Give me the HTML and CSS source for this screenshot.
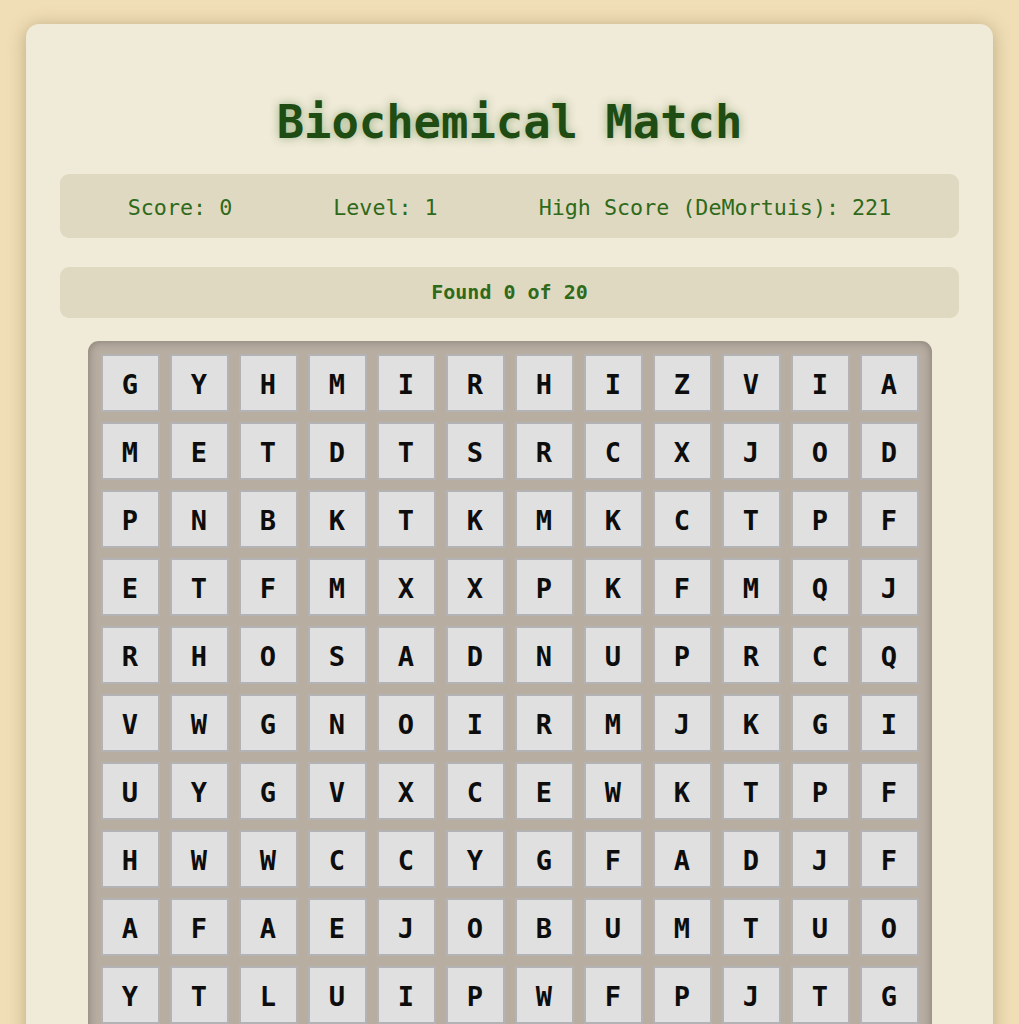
FILE: index.html
```html
<!DOCTYPE html>
<html lang="en">

<head>
  <meta charset="UTF-8">
  <meta name="viewport" content="width=device-width, initial-scale=1.0">
  <title>Biochemical Match</title>
  <link rel="stylesheet" href="styles.css">
</head>

<body>

  <div class="container">
    <h1 class="title">Biochemical Match</h1>

    <div class="stats">
      <span id="score">Score: 0</span>
      <span id="level">Level: 1</span>
      <span id="highScore">High Score (DeMortuis): 221</span>
    </div>

    <div class="progress" id="progress">Found 0 of 20</div>

    <div class="board" id="board"></div>
  </div>

  <script>
    const ROWS = [
      "GYHMIRHIZVIA",
      "METDTSRCXJOD",
      "PNBKTKMKCTPF",
      "ETFMXXPKFMQJ",
      "RHOSADNUPRCQ",
      "VWGNOIRMJKGI",
      "UYGVXCEWKTPF",
      "HWWCCYGFADJF",
      "AFAEJOBUMTUO",
      "YTLUIPWFPJTG",
      "KSLNBQEAHRXD",
      "ZCOPLAWTNEYM"
    ];

    function buildBoard() {
      const board = document.getElementById('board');
      ROWS.forEach((row, r) => {
        [...row].forEach((ch, c) => {
          const cell = document.createElement('div');
          cell.className = 'cell';
          cell.dataset.row = r;
          cell.dataset.col = c;
          cell.textContent = ch;
          board.appendChild(cell);
        });
      });
    }

    buildBoard();
  </script>
</body>

</html>
```

FILE: styles.css
```css
body {
  margin: 0;
  padding: 24px 26px;
  background-color: #f0deb6;
  font-family: "DejaVu Sans Mono", "Liberation Mono", monospace;
}

.container {
  padding: 0 34px 34px;
  background-color: #f0ead8;
  border-radius: 13px;
  box-shadow: 0 2px 18px rgba(90, 70, 30, 0.35);
}

.title {
  margin: 0;
  padding: 72px 0 24px;
  font-size: 45.5px;
  line-height: 54px;
  font-weight: bold;
  text-align: center;
  color: #1e4c12;
  text-shadow: 0 0 10px rgba(46, 110, 26, 0.45);
}

.stats {
  display: flex;
  justify-content: center;
  gap: 101px;
  padding: 22px 0 18px;
  background-color: #e0d9c2;
  border-radius: 9px;
  font-size: 21.7px;
  line-height: 24px;
  color: #2e6a1a;
}

.progress {
  margin-top: 29px;
  padding: 14px 0;
  background-color: #e0d9c2;
  border-radius: 9px;
  font-size: 20px;
  line-height: 23px;
  font-weight: bold;
  text-align: center;
  color: #2e6a1a;
}

/* letter grid */
.board {
  display: grid;
  grid-template-columns: repeat(12, 59px);
  grid-auto-rows: 58px;
  gap: 10px;
  width: fit-content;
  margin: 23px auto 0;
  padding: 13px;
  background-color: #b8ada1;
  border-radius: 11px;
  box-shadow: inset 0 0 10px rgba(0, 0, 0, 0.3);
}

.cell {
  display: flex;
  align-items: center;
  justify-content: center;
  box-sizing: border-box;
  padding-top: 3px;
  background-color: #e0e0e0;
  border: 2px solid #b3b3b6;
  font-size: 27px;
  font-weight: bold;
  color: #0d0d0d;
  cursor: pointer;
  user-select: none;
}
```
